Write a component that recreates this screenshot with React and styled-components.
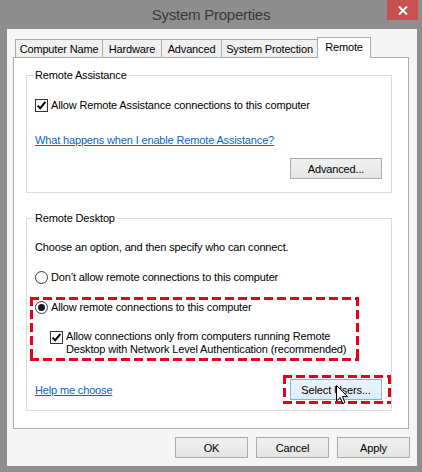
import React from "react";
import styled, { createGlobalStyle, css } from "styled-components";

const GlobalStyle = createGlobalStyle`
  html, body { margin: 0; padding: 0; }
  body {
    width: 422px; height: 472px; overflow: hidden;
    background: #8e8e8e;
    font-family: "Liberation Sans", Arial, sans-serif;
    font-size: 11px;
    letter-spacing: -0.15px;
    color: #000;
  }
  * { box-sizing: border-box; }
`;

const Window = styled.div`
  position: relative;
  width: 422px;
  height: 472px;
  background: #8e8e8e;
  display: flex;
  flex-direction: column;
`;

const TitleBar = styled.div`
  height: 29px;
  display: grid;
  grid-template-columns: 1fr auto 1fr;
  align-items: start;
`;

const Title = styled.div`
  grid-column: 2;
  font-size: 15px;
  letter-spacing: -0.25px;
  line-height: 29px;
  color: #383838;
`;

const CloseButton = styled.div`
  grid-column: 3;
  justify-self: end;
  width: 31px;
  height: 20px;
  margin-right: 4px;
  background: #c75050;
  display: flex;
  align-items: center;
  justify-content: center;
`;

const Client = styled.div`
  flex: 1;
  margin: 0 5px 6px 7px;
  background: #f5f5f5;
  padding: 8px 8px 8px 6px;
  display: flex;
  flex-direction: column;
`;

const TabRow = styled.div`
  height: 20px;
  display: flex;
  align-items: flex-end;
  padding-left: 2px;
`;

const Tab = styled.div`
  width: ${(p) => p.w}px;
  height: 18px;
  margin-left: -1px;
  &:first-child { margin-left: 0; }
  border: 1px solid #acacac;
  border-bottom: none;
  background: #f0f0f0;
  text-align: center;
  line-height: 18px;
  white-space: nowrap;
  ${(p) =>
    p.active &&
    css`
      height: 21px;
      margin-bottom: -1px;
      background: #fff;
      line-height: 18px;
      position: relative;
      z-index: 1;
    `}
`;

const Panel = styled.div`
  height: 372px;
  background: #fff;
  border: 1px solid #acacac;
  padding: 17px 16px 16px 12px;
  display: flex;
  flex-direction: column;
  gap: 25px;
`;

const Group = styled.div`
  border: 1px solid #dcdcdc;
  padding: 0 9px ${(p) => p.pb}px 8px;
  display: flex;
  flex-direction: column;
  align-items: flex-start;
`;

const Legend = styled.div`
  margin: -9px 0 0 -2px;
  padding: 0 2px;
  background: #fff;
  line-height: 16px;
`;

const Row = styled.div`
  display: flex;
  align-items: ${(p) => (p.top ? "flex-start" : "center")};
  gap: 3px;
  margin-top: ${(p) => p.mt || 0}px;
  margin-left: ${(p) => p.ml || 0}px;
  line-height: 16px;
  white-space: nowrap;
`;

const Text = styled.div`
  margin-top: ${(p) => p.mt || 0}px;
  line-height: 16px;
  white-space: nowrap;
`;

const MultiLine = styled.div`
  line-height: 13px;
`;

const Link = styled.a`
  display: block;
  margin-top: ${(p) => p.mt || 0}px;
  color: #0066cc;
  text-decoration: underline;
  line-height: 16px;
  cursor: pointer;
`;

const BoxCheck = styled.span`
  width: 13px;
  height: 13px;
  flex: none;
  border: 1px solid #333;
  background: #fff;
  display: flex;
  align-items: center;
  justify-content: center;
  margin-top: ${(p) => p.mt || 0}px;
`;

const RadioCircle = styled.span`
  width: 13px;
  height: 13px;
  flex: none;
  border-radius: 50%;
  border: 1px solid #3c3c3c;
  background: #fff;
  display: flex;
  align-items: center;
  justify-content: center;
  &::after {
    content: "";
    width: 7px;
    height: 7px;
    border-radius: 50%;
    background: ${(p) => (p.checked ? "#1a1a1a" : "transparent")};
  }
`;

const dashColor = "#e5001c";
const RedBox = styled.div`
  padding: ${(p) => p.pad};
  margin: ${(p) => p.m || 0};
  width: ${(p) => (p.w ? `${p.w}px` : "auto")};
  background:
    repeating-linear-gradient(90deg, ${dashColor} 0 9px, transparent 9px 13px) top left / 100% 3px no-repeat,
    repeating-linear-gradient(90deg, ${dashColor} 0 9px, transparent 9px 13px) bottom left / 100% 3px no-repeat,
    repeating-linear-gradient(180deg, ${dashColor} 0 9px, transparent 9px 13px) top left / 3px 100% no-repeat,
    repeating-linear-gradient(180deg, ${dashColor} 0 9px, transparent 9px 13px) top right / 3px 100% no-repeat;
`;

const Button = styled.div`
  width: ${(p) => p.w}px;
  height: 21px;
  flex: none;
  border: 1px solid #acacac;
  background: linear-gradient(#f0f0f0, #e5e5e5);
  display: flex;
  align-items: center;
  justify-content: center;
  white-space: nowrap;
  ${(p) =>
    p.hot &&
    css`
      border-color: #7eb4ea;
      background: linear-gradient(#ecf4fc, #dcecfc);
    `}
`;

const RightRow = styled.div`
  align-self: stretch;
  display: flex;
  justify-content: flex-end;
  margin-top: ${(p) => p.mt || 0}px;
`;

const SpreadRow = styled.div`
  align-self: stretch;
  display: flex;
  justify-content: space-between;
  align-items: center;
  margin-top: ${(p) => p.mt || 0}px;
  margin-right: -9px;
`;

const DialogButtons = styled.div`
  display: flex;
  justify-content: flex-end;
  gap: 8px;
  margin-top: 8px;
  margin-right: -1px;
`;

const Cursor = styled.svg`
  position: absolute;
  left: 336px;
  top: 385px;
`;

const Check = () => (
  <svg width="11" height="11" viewBox="0 0 11 11">
    <path d="M1.6 5.6 L4.2 8.3 L9.4 1.8" fill="none" stroke="#000" strokeWidth="2" />
  </svg>
);

const CheckBox = ({ mt }) => (
  <BoxCheck mt={mt}>
    <Check />
  </BoxCheck>
);

export default function App() {
  return (
    <>
      <GlobalStyle />
      <Window>
        <TitleBar>
          <Title>System Properties</Title>
          <CloseButton>
            <svg width="10" height="9" viewBox="0 0 10 9">
              <path d="M1 0.5 L9 8.5 M9 0.5 L1 8.5" stroke="#fff" strokeWidth="2" />
            </svg>
          </CloseButton>
        </TitleBar>
        <Client>
          <TabRow>
            <Tab w={88}>Computer Name</Tab>
            <Tab w={60}>Hardware</Tab>
            <Tab w={61}>Advanced</Tab>
            <Tab w={97}>System Protection</Tab>
            <Tab w={54} active>
              Remote
            </Tab>
          </TabRow>
          <Panel>
            <Group pb={13}>
              <Legend>Remote Assistance</Legend>
              <Row mt={14}>
                <CheckBox />
                <span>Allow Remote Assistance connections to this computer</span>
              </Row>
              <Link mt={19}>What happens when I enable Remote Assistance?</Link>
              <RightRow mt={10}>
                <Button w={92}>Advanced...</Button>
              </RightRow>
            </Group>
            <Group pb={6}>
              <Legend>Remote Desktop</Legend>
              <Text mt={13}>Choose an option, and then specify who can connect.</Text>
              <Row mt={14}>
                <RadioCircle />
                <span>Don’t allow remote connections to this computer</span>
              </Row>
              <RedBox pad="2px 0 5px 5px" m="12px 0 0 -5px" w={329}>
                <Row>
                  <RadioCircle checked />
                  <span>Allow remote connections to this computer</span>
                </Row>
                <Row top mt={15} ml={15}>
                  <CheckBox mt={1} />
                  <MultiLine>
                    Allow connections only from computers running Remote
                    <br />
                    Desktop with Network Level Authentication (recommended)
                  </MultiLine>
                </Row>
              </RedBox>
              <SpreadRow mt={14}>
                <Link>Help me choose</Link>
                <RedBox pad="4px 9px 4px 7px">
                  <Button w={92} hot>
                    Select Users...
                  </Button>
                </RedBox>
              </SpreadRow>
            </Group>
          </Panel>
          <DialogButtons>
            <Button w={73}>OK</Button>
            <Button w={73}>Cancel</Button>
            <Button w={73}>Apply</Button>
          </DialogButtons>
        </Client>
        <Cursor width="13" height="20" viewBox="0 0 13 20">
          <path
            d="M0.5 0.5 L0.5 16 L4.2 12.4 L6.8 18.5 L9 17.6 L6.5 11.6 L11.5 11.6 Z"
            fill="#fff"
            stroke="#000"
            strokeWidth="1"
            strokeLinejoin="miter"
          />
        </Cursor>
      </Window>
    </>
  );
}
